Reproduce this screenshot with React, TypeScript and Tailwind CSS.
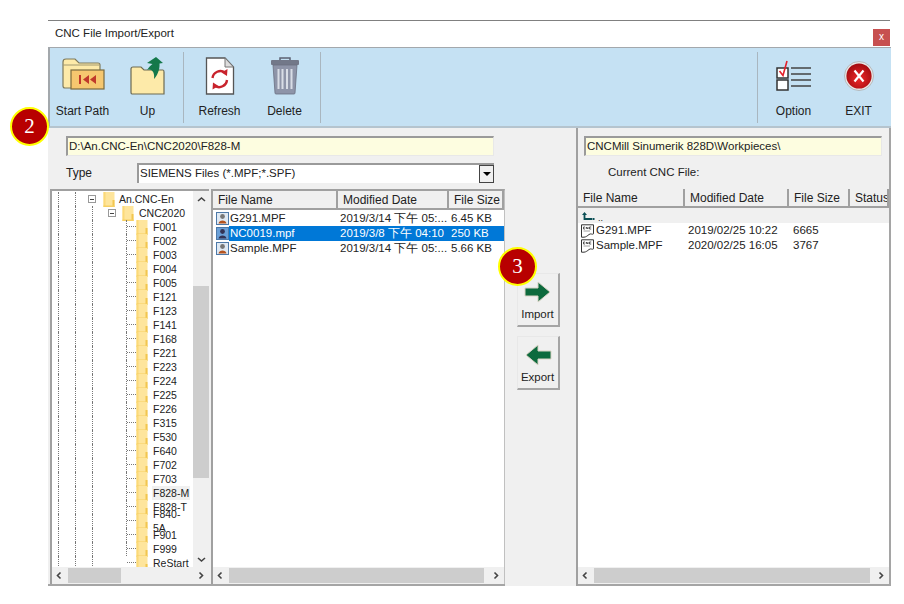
import React from "react";

const FONT = "font-['Liberation_Sans',Arial,sans-serif]";
const folders = ["F001","F002","F003","F004","F005","F121","F123","F141","F168","F221","F223","F224","F225","F226","F315","F530","F640","F702","F703","F828-M","F828-T","F840-5A","F901","F999","ReStart"];

function Guide({ on = true }: { on?: boolean }) {
  return <div className={`w-[17px] h-full shrink-0 ${on ? "border-l border-dotted border-[#777]" : ""}`} />;
}
function TreeFolder({ small = false }: { small?: boolean }) {
  return (
    <svg width="12" height="15" viewBox="0 0 12 15" className={`shrink-0 ${small ? "" : ""}`}>
      <rect x="0.5" y="0" width="11" height="15" fill="#fee59c" />
      <rect x="0.5" y="0" width="2" height="15" fill="#fbd979" />
      <rect x="9.5" y="8" width="2" height="7" fill="#f2c64f" />
      <rect x="0.5" y="13.5" width="11" height="1.5" fill="#f6cf63" />
    </svg>
  );
}
function Expander() {
  return (
    <div className="w-[8px] h-[8px] border border-[#999] bg-white flex items-center justify-center shrink-0">
      <div className="w-[4px] h-px bg-[#444]" />
    </div>
  );
}
function Tree() {
  return (
    <div className="flex-1 min-h-0 overflow-hidden pt-[1px] text-[10.5px] leading-[14px] text-[#222]">
      <div className="flex h-[14px] pl-[6px] items-center">
        <Guide /><Guide />
        <div className="w-[8px] ml-[-4px] mr-[7px] shrink-0"><Expander /></div>
        <TreeFolder />
        <span className="ml-[4px]">An.CNC-En</span>
      </div>
      <div className="flex h-[14px] pl-[6px] items-center">
        <Guide /><Guide /><Guide />
        <div className="w-[8px] ml-[-1px] mr-[6px] shrink-0"><Expander /></div>
        <TreeFolder />
        <span className="ml-[5px]">CNC2020</span>
      </div>
      {folders.map((f, i) => (
        <div key={f} className="flex h-[14px] pl-[6px] items-center">
          <Guide /><Guide /><Guide /><Guide on={false} />
          <div className={`w-[10px] shrink-0 self-stretch flex flex-col border-l border-dotted border-[#777] ${i === folders.length - 1 ? "border-transparent" : ""}`}>
            <div className="h-[7px] border-b border-dotted border-[#777]" />
          </div>
          <TreeFolder />
          <span className={`ml-[4px] px-px ${f === "F828-M" ? "bg-[#f0f0f0]" : ""}`}>{f}</span>
        </div>
      ))}
    </div>
  );
}
function Chevron({ dir }: { dir: "l" | "r" | "u" | "d" }) {
  const d = { l: "M5.5 1.5 L2.5 4.5 L5.5 7.5", r: "M2.5 1.5 L5.5 4.5 L2.5 7.5", u: "M1 6 L4.5 3 L8 6", d: "M1 3 L4.5 6 L8 3" }[dir];
  return <svg width="9" height="9" viewBox="0 0 9 9"><path d={d} fill="none" stroke="#444" strokeWidth="1.6" /></svg>;
}
function HBar({ left, width }: { left: number; width: number }) {
  return (
    <div className="h-[17px] shrink-0 bg-[#f0f0f0] flex items-center">
      <div className="w-[15px] flex justify-center shrink-0"><Chevron dir="l" /></div>
      <div className="flex-1 h-[15px] flex">
        <div style={{ width: left }} className="shrink-0" />
        <div style={{ width }} className="bg-[#cdcdcd] h-full shrink-0" />
      </div>
      <div className="w-[15px] flex justify-center shrink-0"><Chevron dir="r" /></div>
    </div>
  );
}
function VBar() {
  return (
    <div className="w-[16px] shrink-0 bg-[#f0f0f0] flex flex-col items-center">
      <div className="h-[16px] flex items-center"><Chevron dir="u" /></div>
      <div className="flex-1 w-full pt-[79px] pb-[73px] flex">
        <div className="bg-[#cdcdcd] w-full" />
      </div>
      <div className="h-[16px] flex items-center"><Chevron dir="d" /></div>
    </div>
  );
}
function HCell({ w, children, grow }: { w?: string; children: React.ReactNode; grow?: boolean }) {
  return (
    <div className={`${w ?? ""} ${grow ? "flex-1 min-w-0 overflow-hidden" : "shrink-0"} h-full pl-[5px] flex items-center border-r-2 border-[#a0a0a0] bg-[#f0f0f0] whitespace-nowrap`}>
      {children}
    </div>
  );
}
function NcIcon({ selected = false }: { selected?: boolean }) {
  return (
    <svg width="13" height="13" viewBox="0 0 13 13" className="shrink-0">
      <rect x="0.5" y="0.5" width="12" height="12" fill={selected ? "#6aa0d8" : "#dfe9f3"} stroke="#4d79a8" />
      <circle cx="6.5" cy="4.5" r="2.4" fill={selected ? "#335" : "#777"} />
      <path d="M2.5 11.5 C3 7.5 10 7.5 10.5 11.5Z" fill={selected ? "#335" : "#b5541f"} />
    </svg>
  );
}
function CncIcon() {
  return (
    <svg width="15" height="14" viewBox="0 0 15 14" className="shrink-0">
      <path d="M1.5 0.8 H13.5 V9.8 C12 11 11 9 9 10.5 C7.5 11.8 6 13 4 13.2 H1.5 Z" fill="#fff" stroke="#333" strokeWidth="1" />
      <path d="M3.5 3 H5 M3.5 3 V5 H5 M6.3 5 V3 L8 5 V3 M11.2 3 H9.5 V5 H11.2" fill="none" stroke="#333" strokeWidth="0.8" />
      <path d="M3.5 7 H10" stroke="#888" strokeWidth="0.8" />
    </svg>
  );
}
function ListRow({ name, date, size, selected }: { name: string; date: string; size: string; selected?: boolean }) {
  return (
    <div className="flex h-[15px] items-center pl-[3px]">
      <NcIcon selected={selected} />
      <div className={`flex h-full flex-1 items-center ${selected ? "bg-[#0078d7] text-white" : ""}`}>
        <div className="w-[110px] pl-px shrink-0">{name}</div>
        <div className={`w-[112px] pl-[1px] shrink-0 ${selected ? "" : ""}`}>{date}</div>
        <div className="pl-[0px]">{size}</div>
      </div>
    </div>
  );
}
function StartPathIcon() {
  return (
    <svg width="44" height="40" viewBox="0 0 44 40">
      <path d="M2 6 Q2 3 5 3 H14 L18 7 H37 Q39 7 39 9 V32 H4 Q2 32 2 30Z" fill="#fdeaa9" stroke="#7f7a5c" strokeWidth="1.2" />
      <path d="M2.5 9 H38" stroke="#8c8663" strokeWidth="0.8" />
      <rect x="10" y="14" width="33" height="19" fill="#f6c76f" stroke="#7a6a3e" strokeWidth="1.2" />
      <rect x="18" y="19" width="2" height="9" fill="#c0392b" />
      <path d="M28 19 L22 23.5 L28 28Z M35 19 L29 23.5 L35 28Z" fill="#c0392b" />
    </svg>
  );
}
function UpIcon() {
  return (
    <svg width="36" height="40" viewBox="0 0 36 40">
      <path d="M1 13 Q1 11 3 11 H11 L14 14 H33 Q34 14 34 16 V38 H2 Q1 38 1 36Z" fill="#fdeaa9" stroke="#6d6a52" strokeWidth="1.2" />
      <path d="M17 7 L26 1 L33 7 L29.5 7.5 C30 14 27 20 24 23 C25 17 22 12 17 14 C19 11 21 9 22.5 8 Z" fill="#14784a" />
    </svg>
  );
}
function RefreshIcon() {
  return (
    <svg width="30" height="38" viewBox="0 0 30 38">
      <path d="M1.5 1 H20 L28.5 10 V37 H1.5 Z" fill="#fff" stroke="#555" strokeWidth="1.3" />
      <path d="M20 1 V10 H28.5 Z" fill="#ddd" stroke="#777" strokeWidth="1" />
      <path d="M7.5 21 A8 8 0 0 1 20 15.5" fill="none" stroke="#c8232c" strokeWidth="2.4" />
      <path d="M22.5 12 L22 19 L16.5 15.5Z" fill="#c8232c" />
      <path d="M22 23 A8 8 0 0 1 10 29" fill="none" stroke="#c8232c" strokeWidth="2.4" />
      <path d="M7.5 32.5 L8 25.5 L13.5 29Z" fill="#c8232c" />
    </svg>
  );
}
function TrashIcon() {
  return (
    <svg width="30" height="38" viewBox="0 0 30 38">
      <path d="M10 3 V1 H20 V3" fill="none" stroke="#5c6273" strokeWidth="1.5" />
      <rect x="1" y="3" width="28" height="5" rx="1" fill="#727889" />
      <path d="M3 8 H27 L25 36 Q25 37 24 37 H6 Q5 37 5 36Z" fill="#8e94a8" stroke="#6a6f80" strokeWidth="0.8" />
      <path d="M8.5 12 V32 M12.5 12 V32 M17 12 V32 M21.5 12 V32" stroke="#d9dde6" strokeWidth="2" />
    </svg>
  );
}
function OptionIcon() {
  return (
    <svg width="36" height="32" viewBox="0 0 36 32">
      <rect x="1" y="8" width="11" height="10" fill="#fff" stroke="#333" strokeWidth="1.5" />
      <rect x="1" y="20" width="11" height="10" fill="#fff" stroke="#333" strokeWidth="1.5" />
      <path d="M3.5 11 L7 15.5 L11 1" fill="none" stroke="#e3202b" strokeWidth="1.6" />
      <path d="M15 8 H35 M15 14 H35 M15 20 H35 M15 26 H35" stroke="#444" strokeWidth="1.5" />
    </svg>
  );
}
function ExitIcon() {
  return (
    <svg width="30" height="30" viewBox="0 0 30 30">
      <defs>
        <radialGradient id="ex" cx="50%" cy="60%" r="60%">
          <stop offset="0%" stopColor="#ee2a2a" />
          <stop offset="100%" stopColor="#a20a0e" />
        </radialGradient>
      </defs>
      <circle cx="15" cy="15" r="14.5" fill="#e6e6e6" stroke="#9c9c9c" strokeWidth="0.6" />
      <circle cx="15" cy="15" r="12.6" fill="url(#ex)" />
      <path d="M10.5 9.5 L19.5 20.5 M19.5 9.5 L10.5 20.5" stroke="#fff" strokeWidth="2.2" />
    </svg>
  );
}
function ToolButton({ icon, label }: { icon: React.ReactNode; label: string }) {
  return (
    <div className="w-[65px] h-full flex flex-col items-center shrink-0">
      <div className="h-[50px] pt-[5px] flex items-center justify-center">{icon}</div>
      <div className="mt-[6px] text-[12px] leading-[14px] text-[#222]">{label}</div>
    </div>
  );
}
function Sep() {
  return <div className="w-px h-[71px] self-center bg-[#a9b6bf] shrink-0 mx-[3px]" />;
}
function Arrow({ left }: { left?: boolean }) {
  return (
    <svg width="28" height="22" viewBox="0 0 28 22" style={left ? { transform: "scaleX(-1)" } : undefined}>
      <path d="M1 7 H14 V1 L26 11 L14 21 V15 H1Z" fill="#0d6a3d" stroke="#d9d3c5" strokeWidth="1" />
    </svg>
  );
}
function MoveButton({ left, label }: { left?: boolean; label: string }) {
  return (
    <div className="w-[43px] h-[54px] bg-[#f0f0f0] border-r-2 border-b-2 border-[#a5a5a5] border-t border-l border-t-[#e8e8e8] border-l-[#e8e8e8] flex flex-col items-center pt-[7px]">
      <Arrow left={left} />
      <div className="mt-[4px] text-[11.5px] leading-[14px] text-[#222]">{label}</div>
    </div>
  );
}
function Badge({ n, pos }: { n: string; pos: string }) {
  return (
    <div className={`absolute ${pos} w-[39px] h-[39px] rounded-full bg-[#b80000] border-[2px] border-[#ffff00] flex items-center justify-center text-white text-[21px] font-['Liberation_Serif',serif]`}>
      {n}
    </div>
  );
}

export default function App() {
  return (
    <div className={`relative w-[904px] h-[604px] bg-white pt-[20px] pl-[48px] overflow-hidden ${FONT} text-[12px] text-[#222]`}>
      <div className="w-[843px] h-[566px] flex flex-col">
        <div className="h-px bg-[#808080] w-[842px] shrink-0" />
        <div className="h-[26px] shrink-0 flex items-center justify-between pl-[7px] text-[11.5px]">
          <span>CNC File Import/Export</span>
          <div className="w-[17px] h-[17px] mt-[6px] mr-px bg-[#c75050] flex items-center justify-center text-white text-[10px] leading-none">x</div>
        </div>
        <div className="h-[81px] shrink-0 bg-[#c5e1f3] border-t border-l-2 border-b-2 border-[#a3a8ac] border-b-[#b5c4ce] flex items-stretch">
          <ToolButton icon={<StartPathIcon />} label="Start Path" />
          <ToolButton icon={<UpIcon />} label="Up" />
          <Sep />
          <ToolButton icon={<RefreshIcon />} label="Refresh" />
          <ToolButton icon={<TrashIcon />} label="Delete" />
          <Sep />
          <div className="flex-1" />
          <Sep />
          <ToolButton icon={<OptionIcon />} label="Option" />
          <ToolButton icon={<ExitIcon />} label="EXIT" />
        </div>
        <div className="flex-1 min-h-0 flex bg-[#f0f0f0]">
          <div className="w-[457px] shrink-0 flex flex-col border-b-2 border-[#a5a5a5]">
            <div className="pl-[18px] pt-[8px] pr-[11px]">
              <div className="h-[20px] bg-[#fdfde0] border-t-2 border-l-2 border-[#9a9a9a] border-r border-b border-r-[#e8e8e8] border-b-[#e8e8e8] px-px flex items-center text-[11.5px]">D:\An.CNC-En\CNC2020\F828-M</div>
            </div>
            <div className="pl-[18px] pr-[11px] mt-[7px] h-[20px] flex items-center">
              <div className="w-[71px] text-[12px]">Type</div>
              <div className="flex-1 h-[20px] bg-white border-t-2 border-l-2 border-[#9a9a9a] flex items-center justify-between text-[11.5px] pl-px">
                <span>SIEMENS Files (*.MPF;*.SPF)</span>
                <div className="w-[15px] h-full bg-[#f0f0f0] border border-[#444] flex items-center justify-center">
                  <div className="w-0 h-0 border-l-[4px] border-r-[4px] border-t-[4px] border-l-transparent border-r-transparent border-t-black" />
                </div>
              </div>
            </div>
            <div className="flex-1 min-h-0 flex mt-[6px]">
              <div className="w-[159px] ml-[2px] shrink-0 flex flex-col bg-white border-t-2 border-l-2 border-[#a0a0a0]">
                <div className="flex-1 min-h-0 flex">
                  <Tree />
                  <VBar />
                </div>
                <HBar left={1} width={53} />
              </div>
              <div className="flex-1 min-w-0 ml-[2px] flex flex-col bg-white border-t-2 border-l-2 border-r border-[#a0a0a0] border-r-[#c0c0c0]">
                <div className="h-[17px] flex shrink-0 border-b-2 border-[#a0a0a0] box-content text-[12px]">
                  <HCell w="w-[125px]">File Name</HCell>
                  <HCell w="w-[111px]">Modified Date</HCell>
                  <HCell grow>File Size</HCell>
                </div>
                <div className="flex-1 min-h-0 pt-px text-[11.5px]">
                  <ListRow name="G291.MPF" date="2019/3/14 下午 05:..." size="6.45 KB" />
                  <ListRow name="NC0019.mpf" date="2019/3/8 下午 04:10" size="250 KB" selected />
                  <ListRow name="Sample.MPF" date="2019/3/14 下午 05:..." size="5.66 KB" />
                </div>
                <HBar left={1} width={255} />
              </div>
            </div>
          </div>
          <div className="w-[73px] shrink-0 border-r-2 border-[#a0a0a0] flex flex-col items-center gap-[9px] pt-[145px] pr-[5px]">
            <MoveButton label="Import" />
            <MoveButton left label="Export" />
          </div>
          <div className="flex-1 min-w-0 flex flex-col bg-[#f0f0f0] border-r-2 border-b-2 border-[#a5a5a5]">
            <div className="pl-[6px] pt-[8px] pr-[7px]">
              <div className="h-[20px] bg-[#fdfde0] border-t-2 border-l-2 border-[#9a9a9a] border-r border-b border-r-[#e8e8e8] border-b-[#e8e8e8] px-px flex items-center text-[11.5px] whitespace-nowrap overflow-hidden">CNCMill Sinumerik 828D\Workpieces\</div>
            </div>
            <div className="pl-[30px] mt-[7px] h-[20px] flex items-center text-[11.5px]">Current CNC File:</div>
            <div className="flex-1 min-h-0 flex flex-col mt-[6px] bg-white">
              <div className="h-[17px] flex shrink-0 border-b-2 border-[#a0a0a0] box-content text-[12px]">
                <HCell w="w-[107px]">File Name</HCell>
                <HCell w="w-[104px]">Modified Date</HCell>
                <HCell w="w-[61px]">File Size</HCell>
                <HCell grow>Status</HCell>
              </div>
              <div className="flex-1 min-h-0 text-[11.5px]">
                <div className="h-[15px] bg-[#f0f0f0] flex items-center pl-[3px]">
                  <svg width="15" height="10" viewBox="0 0 15 10" className="shrink-0">
                    <path d="M3.5 1 L1 4 H2.6 V9 H11 V7 H4.4 V4 H6 Z" fill="#0b4f55" />
                    <rect x="11.5" y="7" width="2" height="2" fill="#0b4f55" />
                  </svg>
                  <span className="ml-[2px] text-[9px] leading-[9px] self-end">..</span>
                </div>
                <div className="h-[15px] flex items-center pl-[2px]">
                  <CncIcon />
                  <div className="w-[92px] ml-px shrink-0">G291.MPF</div>
                  <div className="w-[105px] shrink-0">2019/02/25 10:22</div>
                  <div>6665</div>
                </div>
                <div className="h-[15px] flex items-center pl-[2px]">
                  <CncIcon />
                  <div className="w-[92px] ml-px shrink-0">Sample.MPF</div>
                  <div className="w-[105px] shrink-0">2020/02/25 16:05</div>
                  <div>3767</div>
                </div>
              </div>
              <HBar left={1} width={276} />
            </div>
          </div>
        </div>
      </div>
      <Badge n="2" pos="left-[10px] top-[107px]" />
      <Badge n="3" pos="left-[498px] top-[247px]" />
    </div>
  );
}
